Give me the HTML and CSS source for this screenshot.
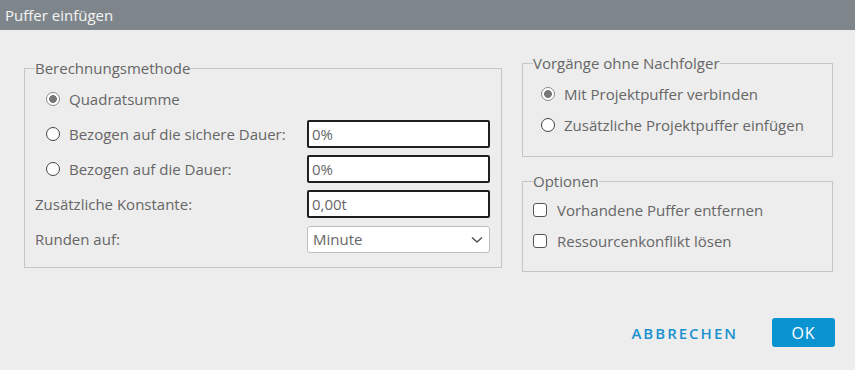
FILE: index.html
```html
<!DOCTYPE html>
<html lang="de">
<head>
    <meta charset="UTF-8">
    <meta name="viewport" content="width=device-width, initial-scale=1.0">
    <title>Puffer einfügen</title>
    <link rel="stylesheet" href="styles.css">
</head>
<body>

    <div class="titlebar">Puffer einfügen</div>

    <div class="content">
        <fieldset class="group method">
            <legend>Berechnungsmethode</legend>

            <div class="row">
                <label class="choice"><input type="radio" name="method" checked> Quadratsumme</label>
            </div>
            <div class="row">
                <label class="choice"><input type="radio" name="method"> Bezogen auf die sichere Dauer:</label>
                <input type="text" class="field" value="0%">
            </div>
            <div class="row">
                <label class="choice"><input type="radio" name="method"> Bezogen auf die Dauer:</label>
                <input type="text" class="field" value="0%">
            </div>
            <div class="row">
                <span class="plain">Zusätzliche Konstante:</span>
                <input type="text" class="field" value="0,00t">
            </div>
            <div class="row">
                <span class="plain">Runden auf:</span>
                <div class="select-wrap">
                    <select class="select">
                        <option>Minute</option>
                        <option>Stunde</option>
                        <option>Tag</option>
                    </select>
                    <svg class="chevron" width="12" height="8" viewBox="0 0 12 8">
                        <path d="M1 1.5 L6 6 L11 1.5" fill="none" stroke="#555" stroke-width="1.6"/>
                    </svg>
                </div>
            </div>
        </fieldset>

        <div class="side">
            <fieldset class="group successors">
                <legend>Vorgänge ohne Nachfolger</legend>
                <label class="choice"><input type="radio" name="succ" checked> Mit Projektpuffer verbinden</label>
                <label class="choice"><input type="radio" name="succ"> Zusätzliche Projektpuffer einfügen</label>
            </fieldset>

            <fieldset class="group options">
                <legend>Optionen</legend>
                <label class="check"><input type="checkbox"> Vorhandene Puffer entfernen</label>
                <label class="check"><input type="checkbox"> Ressourcenkonflikt lösen</label>
            </fieldset>
        </div>
    </div>

    <div class="footer">
        <button class="btn-text">ABBRECHEN</button>
        <button class="btn-ok">OK</button>
    </div>

</body>
</html>
```

FILE: styles.css
```css
body {
    margin: 0;
    background-color: #ededed;
    font-family: "Open Sans", "Liberation Sans", sans-serif;
    font-size: 15px;
    color: #666;
}
.titlebar {
    height: 30px;
    line-height: 30px;
    background-color: #7f868b;
    color: #f4f4f4;
    font-size: 15px;
    padding-left: 5px;
}
.content {
    display: flex;
    align-items: flex-start;
    gap: 20px;
    padding: 0 22px 0 24px;
}
.group {
    margin: 0;
    border: 1px solid #c6c6c6;
    padding: 0 10px;
}
.group legend {
    padding: 0;
    line-height: 17px;
    color: #666;
}
.method {
    width: 478px;
    box-sizing: border-box;
    margin-top: 30px;
    padding-top: 8px;
    padding-bottom: 14px;
}
.row {
    display: flex;
    align-items: center;
    justify-content: space-between;
    height: 28px;
    margin-bottom: 7px;
}
.row:last-child {
    margin-bottom: 0;
}
.choice {
    display: flex;
    align-items: center;
    gap: 9px;
    height: 24px;
}
.method .choice {
    padding-left: 11px;
}
.field {
    width: 183px;
    height: 28px;
    box-sizing: border-box;
    border: 2px solid #1f1f1f;
    border-radius: 2px;
    padding: 0 3px;
    font-family: inherit;
    font-size: 15px;
    color: #666;
    background: #fff;
    margin-right: 1px;
}
.select-wrap {
    position: relative;
    margin-right: 1px;
}
.select {
    appearance: none;
    width: 183px;
    height: 27px;
    border: 1px solid #bdbdbd;
    border-radius: 3px;
    background: #fff;
    padding: 0 5px;
    font-family: inherit;
    font-size: 15px;
    color: #666;
}
.chevron {
    position: absolute;
    right: 7px;
    top: 10px;
    pointer-events: none;
}
.side {
    width: 311px;
    margin-top: 25px;
}
.successors {
    padding-top: 10px;
    padding-bottom: 19px;
}
.successors .choice {
    padding-left: 8px;
    margin-bottom: 7px;
}
.successors .choice:last-child {
    margin-bottom: 0;
}
.options {
    margin-top: 16px;
    padding-top: 8px;
    padding-bottom: 18px;
}
.check {
    display: flex;
    align-items: center;
    gap: 10px;
    height: 24px;
    margin-bottom: 7px;
}
.check:last-child {
    margin-bottom: 0;
}
input[type="radio"] {
    appearance: none;
    margin: 0;
    width: 14px;
    height: 14px;
    border: 1px solid #444;
    border-radius: 50%;
    background: #fff;
}
input[type="radio"]:checked {
    border-color: #8a8a8a;
    background: radial-gradient(circle, #787878 0 3.6px, #fff 4.2px);
}
input[type="checkbox"] {
    appearance: none;
    margin: 0;
    width: 14px;
    height: 14px;
    border: 1.5px solid #555;
    border-radius: 3px;
    background: #fff;
}
.footer {
    display: flex;
    justify-content: flex-end;
    align-items: center;
    gap: 28px;
    padding-right: 20px;
    margin-top: 46px;
}
.btn-text {
    background: none;
    border: none;
    color: #1b91cf;
    font-family: inherit;
    font-size: 15px;
    font-weight: 600;
    letter-spacing: 2px;
    padding: 0 6px 0 8px;
    cursor: pointer;
}
.btn-ok {
    width: 63px;
    height: 29px;
    background-color: #0a93d1;
    color: #fff;
    border: none;
    border-radius: 3px;
    font-family: inherit;
    font-size: 16px;
    letter-spacing: 1px;
    cursor: pointer;
}
```
